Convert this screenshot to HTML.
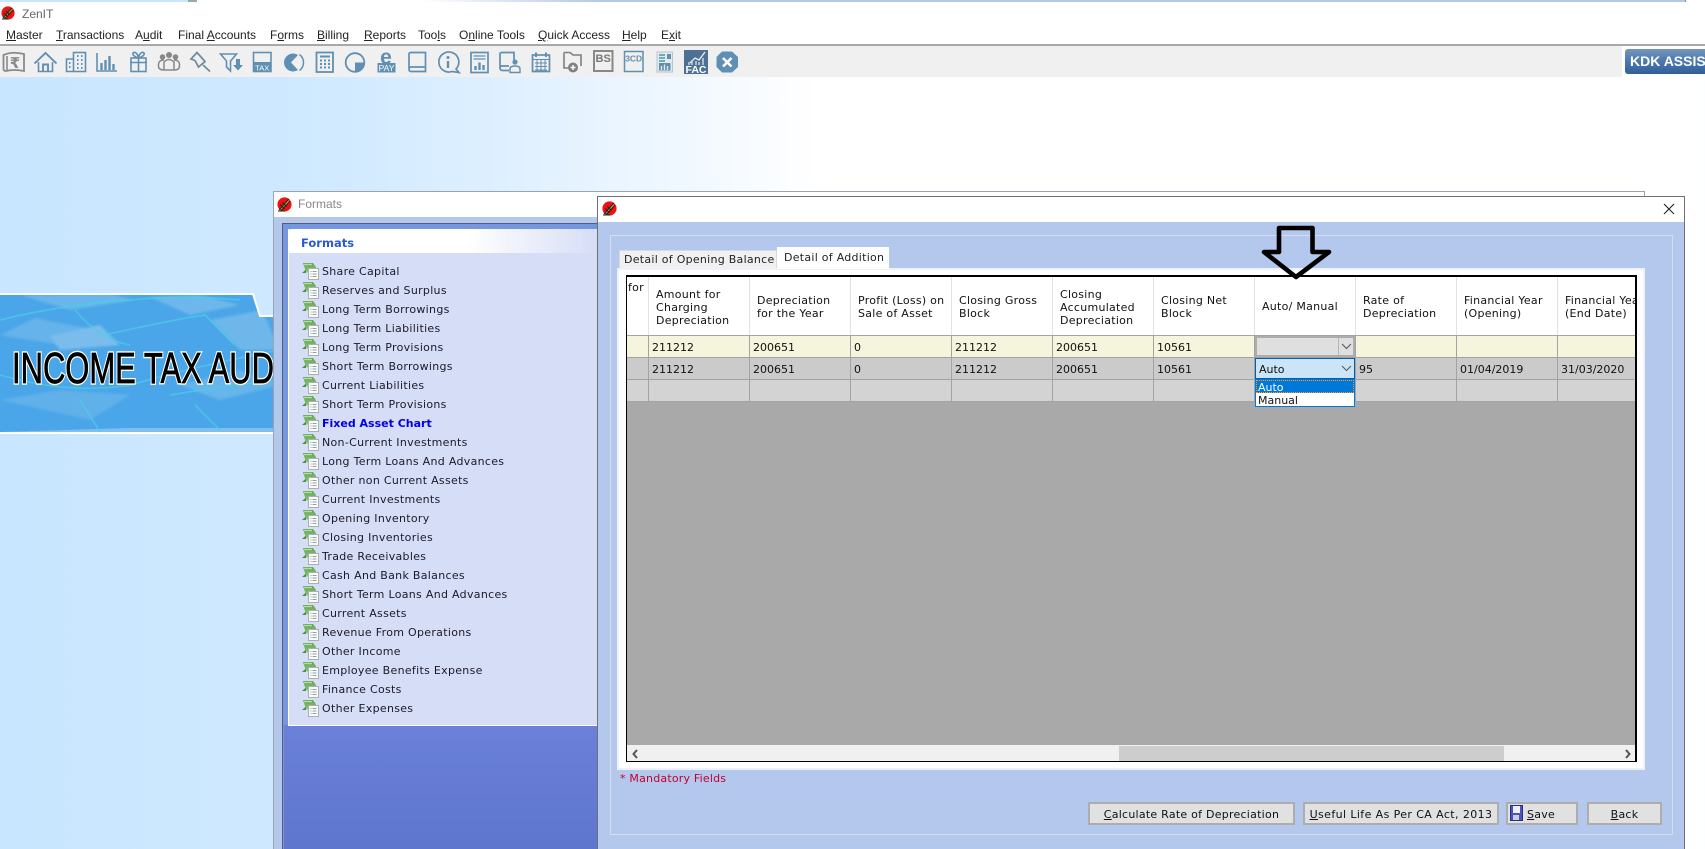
<!DOCTYPE html>
<html>
<head>
<meta charset="utf-8">
<title>ZenIT</title>
<style>
html,body{margin:0;padding:0}
body{width:1705px;height:849px;overflow:hidden;position:relative;background:linear-gradient(to right,#c8e6ff 0%,#cfe9ff 18%,#dff0ff 30%,#f0f8ff 40%,#fff 48%);font-family:"DejaVu Sans","Liberation Sans",sans-serif;font-size:11px;color:#111}
.a{position:absolute}
.t{position:absolute;white-space:nowrap;line-height:13px}
.l{letter-spacing:.27px}
.m{position:absolute;top:28px;font:12px/14px "Liberation Sans",sans-serif;color:#222;white-space:nowrap}
.m u{text-underline-offset:1px}
.li{position:absolute;left:322px;white-space:nowrap;line-height:14px;color:#1a1a2a;letter-spacing:.3px}
.ic{position:absolute;left:302px;width:17px;height:17px}
.v{position:absolute;width:1px;top:277px;height:58px;background:#e3e3e3}
.v2{position:absolute;width:1px;top:335px;height:66px;background:#a3a3a3}
.h{position:absolute;left:627px;width:1010px;height:1px;background:#a3a3a3}
.btn{position:absolute;top:802px;height:23px;box-sizing:border-box;background:#e1e1e1;border:2px solid #adadad;line-height:21px;text-align:center;white-space:nowrap;color:#111;letter-spacing:.25px}
</style>
</head>
<body>
<svg width="0" height="0" style="position:absolute">
<defs>
<symbol id="logo" viewBox="0 0 14 14">
<circle cx="7" cy="7" r="6.600" fill="#ee1212"/>
<path d="M3 11 L10 2.500 L12 4 L5 12 Z" fill="#c9b23a"/>
<path d="M2 12 L11 2 M4 12.500 L12 4 M3 7 L7 11 M5 5 L9 9 M1 13 H7" stroke="#222" stroke-width="1" fill="none"/>
</symbol>
<linearGradient id="gg" x1="0" y1="0" x2="0" y2="1"><stop offset="0" stop-color="#5fa650"/><stop offset="1" stop-color="#8cc47a"/></linearGradient>
<symbol id="doc" viewBox="0 0 17 17">
<path d="M1 0 H11 L14 4 V6 H7 V9.500 H5 L3.500 7.500 Z" fill="url(#gg)"/>
<path d="M2 1.500 H10" stroke="#b5dd9f" stroke-width="1.400"/>
<path d="M0 10 L4 6.500 V10 Z" fill="#4c8f40"/>
<rect x="6.500" y="5.500" width="10" height="11" fill="#fbfbf8" stroke="#aab0b2"/>
<path d="M8.500 8.500h1M8.500 11h1M8.500 13.500h1M10.500 8.500h4M10.500 11h4M10.500 13.500h4" stroke="#8aa3b0" stroke-width="1"/>
</symbol>
</defs>
</svg>

<!-- top strip -->
<div class="a" style="left:0;top:0;width:1705px;height:2px;background:linear-gradient(to right,#c8e6ff 0,#c8e6ff 188px,#9aa 188px,#9aa 197px,#fff 197px,#fff 420px,#b4c7ec 600px,#b4c7ec 1685px,#888 1685px,#888 1686px,#fff 1686px)"></div>
<div class="a" style="left:0;top:2px;width:1705px;height:42px;background:#fff"></div>
<svg class="a" style="left:1px;top:6px" width="14" height="14"><use href="#logo" width="14" height="14"/></svg>
<div class="t" style="left:22px;top:7px;font:12px/14px 'Liberation Sans',sans-serif;color:#666">ZenIT</div>

<div class="m" style="left:6px"><u>M</u>aster</div>
<div class="m" style="left:56px"><u>T</u>ransactions</div>
<div class="m" style="left:135px">A<u>u</u>dit</div>
<div class="m" style="left:178px">Final <u>A</u>ccounts</div>
<div class="m" style="left:270px">F<u>o</u>rms</div>
<div class="m" style="left:317px"><u>B</u>illing</div>
<div class="m" style="left:364px"><u>R</u>eports</div>
<div class="m" style="left:418px">Too<u>l</u>s</div>
<div class="m" style="left:459px">O<u>n</u>line Tools</div>
<div class="m" style="left:538px"><u>Q</u>uick Access</div>
<div class="m" style="left:622px"><u>H</u>elp</div>
<div class="m" style="left:661px">E<u>x</u>it</div>

<div class="a" style="left:0;top:44px;width:1705px;height:2px;background:#a8a8a8"></div>
<div class="a" style="left:0;top:46px;width:1622px;height:31px;background:#f0f0f0"></div>

<!-- toolbar icons -->
<svg class="a" style="left:0;top:46px" width="760" height="32" viewBox="0 46 760 32" fill="none" stroke="#5f90b3" stroke-width="1.600" font-family="Liberation Sans,sans-serif">
<!-- rupee -->
<path d="M3.500 55 Q12 51 24 54 V71 Q14 69 6 71 Q3.500 71 3.500 69 Z" stroke="#8a8a8a" stroke-width="1.800"/>
<path d="M7 56 V70" stroke="#8a8a8a"/>
<text x="15" y="68" font-size="15" font-weight="bold" fill="#8a8a8a" stroke="none" text-anchor="middle" font-family="DejaVu Sans,sans-serif">₹</text>
<!-- house -->
<path d="M34.500 63.500 L45.500 53 L56.500 63.500" stroke-width="1.900"/><path d="M38.500 62 V71.500 H52.500 V62"/><path d="M43 71 V64.500 H48 V71" stroke-width="1.900"/>
<!-- buildings -->
<path d="M73 59 H66.500 V71.500 H73" /><rect x="73.500" y="52.500" width="12" height="19"/>
<path d="M77 56h1.500M81 56h1.500M77 60h1.500M81 60h1.500M77 64h1.500M81 64h1.500M77 68h1.500M81 68h1.500M69 63h1.500M69 67h1.500" stroke-width="2"/>
<!-- bars -->
<path d="M97 53 V71 H117"/><path d="M101.500 70 V63M105.500 70 V60M109.500 70 V56M113.500 70 V64" stroke-width="2.400"/>
<!-- gift -->
<rect x="131" y="58" width="15" height="13.500"/><path d="M130 62.500H147M138.500 58V71.500M138.500 58 C135 57 132 55 133 53 C135 51 138 54 138.500 58 C139 54 142 51 144 53 C145 55 142 57 138.500 58"/>
<!-- people -->
<g stroke="#888" stroke-width="1.500"><circle cx="169" cy="55" r="2.300" fill="#888"/><circle cx="162.500" cy="57" r="2" fill="#888"/><circle cx="175.500" cy="57" r="2" fill="#888"/><path d="M164 70 V62 Q169 57 174 62 V70"/><path d="M164 60 Q158 60 158.500 66 Q158.500 70 164 70 H174 Q179.500 70 179.500 66 Q180 60 174 60"/></g>
<!-- pin -->
<g stroke="#6f8a9e" stroke-width="1.700"><path d="M197 52.500 L191 59 L195 60.500 L198.500 67 L205 61.500 L201 57 Z"/><path d="M203 65 L210 71.500" /></g>
<!-- funnel -->
<path d="M220.500 54 H236.500 L230.500 61 V71 L226.500 67 V61 Z"/><path d="M236 59 V65 H233 L238 70.500 L243 65 H240 V59 Z" fill="#5f90b3" stroke="none"/>
<!-- TAX -->
<rect x="253.500" y="52.500" width="17.500" height="19"/><rect x="253" y="62" width="18.500" height="10" fill="#5f90b3" stroke="none"/>
<text x="262.200" y="70.500" font-size="7.500" fill="#fff" stroke="none" text-anchor="middle">TAX</text>
<!-- pie -->
<path d="M298 55 A9 9 0 1 0 298 70 L291 62.500 Z" fill="#5f90b3" stroke="none"/><path d="M299.500 54.500 A10 10 0 0 1 299.500 70.500" stroke-width="1.500"/>
<!-- calc -->
<rect x="316.500" y="52.500" width="16.500" height="19.500" stroke-width="1.800"/><path d="M320 56.500H330" stroke-width="2"/><path d="M320 60.500h2M324 60.500h2M328 60.500h2M320 64h2M324 64h2M328 64h2M320 67.500h2M324 67.500h2M328 67.500h2" stroke-width="2"/>
<!-- circle quarter -->
<circle cx="355" cy="62.500" r="9.300" stroke-width="1.800"/><path d="M355 62.500 H364.500 A9.500 9.500 0 0 1 355 72 Z" fill="#5f90b3" stroke="none"/>
<!-- e pay -->
<text x="386" y="64" font-size="21" font-weight="bold" fill="#5f90b3" stroke="none" text-anchor="middle">e</text>
<rect x="377.500" y="63" width="18" height="9.500" fill="#5f90b3" stroke="none"/>
<text x="386.500" y="71.200" font-size="8.500" fill="#fff" stroke="none" text-anchor="middle">PAY</text>
<!-- book -->
<path d="M409 69 V54 Q409 52.500 411 52.500 H425.500 V71.500 H411 Q409 71.500 409 69 Q409 67 411 67 H425.500" stroke-width="1.700"/>
<!-- i bubble -->
<path d="M456 69 A10 10 0 1 0 452 71.500 L459 72.500 Z" stroke-width="1.700"/><circle cx="448" cy="57.500" r="1.500" fill="#5f90b3" stroke="none"/><path d="M448 61 V68" stroke-width="2.400"/>
<!-- doc bars -->
<rect x="471" y="52.500" width="17" height="20" stroke-width="1.700"/><path d="M473.500 56H485.500M473.500 59H485.500" stroke-width="1.200"/><path d="M475.500 70 V66M479.500 70 V62.500M483.500 70 V65" stroke-width="2.400"/>
<!-- book user -->
<path d="M500 68 V54 Q500 52.500 502 52.500 H514 V60M500 68 Q500 66 502 66 H509 M500 68 Q500 70.500 503 70.500 H509" stroke-width="1.700"/><circle cx="515" cy="62" r="2.600" fill="#5f90b3" stroke="none"/><path d="M510 72.500 V69 Q510 66 515 66 Q520 66 520 69 V72.500 Z" stroke-width="1.400"/>
<!-- calendar -->
<rect x="532.500" y="55" width="17" height="16.500" stroke-width="1.700"/><path d="M536 52.500V57M546 52.500V57" stroke-width="2"/><path d="M533 59.500H549M535 63H547M535 66.500H547M535 70H547M537 60V71M541 60V71M545 60V71" stroke-width="1"/>
<!-- folder -->
<path d="M564 52.500 H570 L573 55 H581 V66" stroke="#808080"/><path d="M564 52.500 V68 H569" stroke="#808080"/><circle cx="573" cy="67.500" r="5" fill="#808080" stroke="none"/><path d="M570.500 67.500H575.500M573 65V70" stroke="#fff" stroke-width="1.500"/>
<!-- BS -->
<rect x="594" y="51" width="18.500" height="20" stroke="#888" stroke-width="2" fill="#f0f0f0"/>
<text x="603.200" y="62" font-size="11" font-weight="bold" fill="#777" stroke="none" text-anchor="middle">BS</text>
<!-- 3CD -->
<rect x="624.500" y="51.500" width="18.500" height="20" stroke-width="1.500"/>
<text x="633.700" y="61.500" font-size="8.500" font-weight="bold" fill="#6a8fa8" stroke="none" text-anchor="middle">3CD</text>
<!-- report -->
<rect x="657" y="52" width="15.500" height="20" fill="#e4e9ec" stroke="#b4c5cf" stroke-width="1"/><path d="M659 55H665M659 58H665M659 61H665" stroke="#1f8f90" stroke-width="1.300"/><rect x="667" y="54" width="4" height="5" fill="#5f90b3" stroke="none"/><rect x="659" y="63" width="11.500" height="7.500" fill="#5f90b3" stroke="none"/><path d="M661.500 70V66M664.500 70V64.500M667.500 70V66" stroke="#e4e9ec" stroke-width="1.300"/>
<!-- FAC -->
<rect x="684" y="50" width="24" height="24" fill="#4d7095" stroke="none"/>
<path d="M690 63 L695 58 L699 60 L705 52" stroke="#e9f0f6" stroke-width="1.300"/><path d="M689 65V62M692 65V60M696 65V61M699 65V62M703 65V58" stroke="#cbd6e2" stroke-width="1.500"/>
<text x="696" y="73" font-size="10.500" font-weight="bold" fill="#fff" stroke="none" text-anchor="middle">FAC</text>
<!-- X -->
<path d="M722 51.500 H732 L738 57 V67 L732 72.500 H722 L716.500 67 V57 Z" fill="#5f90b3" stroke="none"/><path d="M723 58 L731.500 66.500 M731.500 58 L723 66.500" stroke="#fff" stroke-width="2.600"/>
</svg>

<!-- KDK -->
<div class="a" style="left:1623px;top:46px;width:1px;height:31px;background:#fff"></div>
<div class="a" style="left:1625px;top:49px;width:84px;height:25px;border-radius:3px;background:linear-gradient(#7596bd,#567fb0 35%,#2f5f9c);color:#fff;font:bold 14px/25px 'Liberation Sans',sans-serif;padding-left:5px;box-sizing:border-box;white-space:nowrap;overflow:hidden">KDK ASSIST</div>

<!-- banner -->
<svg class="a" style="left:0;top:291px" width="280" height="146" viewBox="0 291 280 146">
<defs><clipPath id="bc"><path d="M0 294 H253 L260 316 H280 V433 H0 Z"/></clipPath><filter id="bl"><feGaussianBlur stdDeviation="1.200"/></filter></defs>
<path d="M0 294 H253 L260 316 H280 V432 H0 Z" fill="#4aa6e8"/>
<g clip-path="url(#bc)">
<g filter="url(#bl)" opacity=".6">
<path d="M20 295 L70 310 L135 300 L110 294 Z" fill="#7fc0ee"/>
<path d="M35 318 L95 330 L60 345 L0 335 Z" fill="#78bcec"/>
<path d="M50 336 L100 325 L120 345 L60 350Z" fill="#9ccdee"/>
<path d="M150 297 L200 295 L240 305 L190 315 Z" fill="#85c4ee"/>
<path d="M210 320 L262 310 L280 350 L240 350 Z" fill="#85c3ec"/>
<path d="M0 400 L60 390 L130 395 L90 420 Z" fill="#6fb8ec"/>
<path d="M180 385 L240 370 L280 385 L220 400Z" fill="#7abfee"/>
</g>
<path d="M0 432 H280 V428 H130 Z" fill="#7ebfee"/>
<path d="M0 320 Q60 305 130 300 Q180 295 240 300 M75 310 Q100 340 130 345 M105 335 Q170 320 205 315 L235 345 M0 375 Q70 395 130 385 Q200 365 280 350 M80 400 L100 432 M170 395 Q230 385 280 380 M195 405 L220 430" stroke="#4cd0e4" stroke-width="1.700" fill="none" opacity=".65"/>
</g>
<path d="M0 294 H253 L260 316 H280" fill="none" stroke="#fff" stroke-width="2"/>
<path d="M0 433 H280" stroke="#fff" stroke-width="2"/>
<text x="12" y="383" textLength="262" lengthAdjust="spacingAndGlyphs" font-family="Liberation Sans,sans-serif" font-size="44" fill="#000" stroke="#fff" stroke-width="3.400" paint-order="stroke">INCOME TAX AUD</text>
<text x="12" y="383" textLength="262" lengthAdjust="spacingAndGlyphs" font-family="Liberation Sans,sans-serif" font-size="44" fill="#000" stroke="#000" stroke-width=".7">INCOME TAX AUD</text>
</svg>

<!-- Formats window -->
<div class="a" style="left:273px;top:191px;width:1372px;height:658px;background:#b4c7ec;border:1px solid #9ba3ad;box-sizing:border-box;border-bottom:0"></div>
<div class="a" style="left:274px;top:192px;width:1370px;height:25px;background:#fff"></div>
<svg class="a" style="left:277px;top:197px" width="15" height="15"><use href="#logo" width="15" height="15"/></svg>
<div class="t" style="left:298px;top:197px;font:12px/14px 'Liberation Sans',sans-serif;color:#888">Formats</div>
<div class="a" style="left:282px;top:223px;width:330px;height:626px;box-sizing:border-box;border:1px solid #555d6e;border-bottom:0;border-right:0;background:#7597e0"></div>
<div class="a" style="left:284px;top:725px;width:314px;height:124px;background:linear-gradient(#6a80d9,#5f76ce)"></div>
<div class="a" style="left:288px;top:229px;width:310px;height:24px;background:linear-gradient(to right,#fff 0%,#fff 58%,#d6ddf6 100%);border-radius:3px 0 0 0"></div>
<div class="a" style="left:288px;top:253px;width:310px;height:472px;background:#d6ddf6"></div>
<div class="a" style="left:288px;top:725px;width:310px;height:1px;background:#fff"></div>
<div class="a" style="left:288px;top:229px;width:1px;height:497px;background:#fff"></div>
<div class="t" style="left:301px;top:237px;font-weight:bold;color:#2a58d8;font-size:11.500px">Formats</div>

<svg class="ic" style="top:263px"><use href="#doc" width="17" height="17"/></svg><div class="li" style="top:265px">Share Capital</div>
<svg class="ic" style="top:282px"><use href="#doc" width="17" height="17"/></svg><div class="li" style="top:284px">Reserves and Surplus</div>
<svg class="ic" style="top:301px"><use href="#doc" width="17" height="17"/></svg><div class="li" style="top:303px">Long Term Borrowings</div>
<svg class="ic" style="top:320px"><use href="#doc" width="17" height="17"/></svg><div class="li" style="top:322px">Long Term Liabilities</div>
<svg class="ic" style="top:339px"><use href="#doc" width="17" height="17"/></svg><div class="li" style="top:341px">Long Term Provisions</div>
<svg class="ic" style="top:358px"><use href="#doc" width="17" height="17"/></svg><div class="li" style="top:360px">Short Term Borrowings</div>
<svg class="ic" style="top:377px"><use href="#doc" width="17" height="17"/></svg><div class="li" style="top:379px">Current Liabilities</div>
<svg class="ic" style="top:396px"><use href="#doc" width="17" height="17"/></svg><div class="li" style="top:398px">Short Term Provisions</div>
<svg class="ic" style="top:415px"><use href="#doc" width="17" height="17"/></svg><div class="li" style="top:417px;font-weight:bold;color:#0000e6;letter-spacing:0">Fixed Asset Chart</div>
<svg class="ic" style="top:434px"><use href="#doc" width="17" height="17"/></svg><div class="li" style="top:436px">Non-Current Investments</div>
<svg class="ic" style="top:453px"><use href="#doc" width="17" height="17"/></svg><div class="li" style="top:455px">Long Term Loans And Advances</div>
<svg class="ic" style="top:472px"><use href="#doc" width="17" height="17"/></svg><div class="li" style="top:474px">Other non Current Assets</div>
<svg class="ic" style="top:491px"><use href="#doc" width="17" height="17"/></svg><div class="li" style="top:493px">Current Investments</div>
<svg class="ic" style="top:510px"><use href="#doc" width="17" height="17"/></svg><div class="li" style="top:512px">Opening Inventory</div>
<svg class="ic" style="top:529px"><use href="#doc" width="17" height="17"/></svg><div class="li" style="top:531px">Closing Inventories</div>
<svg class="ic" style="top:548px"><use href="#doc" width="17" height="17"/></svg><div class="li" style="top:550px">Trade Receivables</div>
<svg class="ic" style="top:567px"><use href="#doc" width="17" height="17"/></svg><div class="li" style="top:569px">Cash And Bank Balances</div>
<svg class="ic" style="top:586px"><use href="#doc" width="17" height="17"/></svg><div class="li" style="top:588px">Short Term Loans And Advances</div>
<svg class="ic" style="top:605px"><use href="#doc" width="17" height="17"/></svg><div class="li" style="top:607px">Current Assets</div>
<svg class="ic" style="top:624px"><use href="#doc" width="17" height="17"/></svg><div class="li" style="top:626px">Revenue From Operations</div>
<svg class="ic" style="top:643px"><use href="#doc" width="17" height="17"/></svg><div class="li" style="top:645px">Other Income</div>
<svg class="ic" style="top:662px"><use href="#doc" width="17" height="17"/></svg><div class="li" style="top:664px">Employee Benefits Expense</div>
<svg class="ic" style="top:681px"><use href="#doc" width="17" height="17"/></svg><div class="li" style="top:683px">Finance Costs</div>
<svg class="ic" style="top:700px"><use href="#doc" width="17" height="17"/></svg><div class="li" style="top:702px">Other Expenses</div>

<!-- Dialog -->
<div class="a" style="left:597px;top:196px;width:1088px;height:653px;box-sizing:border-box;border:1px solid #707070;border-bottom:0;background:#b4c7ec"></div>
<div class="a" style="left:598px;top:197px;width:1086px;height:25px;background:#fff"></div>
<svg class="a" style="left:602px;top:201px" width="15" height="15"><use href="#logo" width="15" height="15"/></svg>
<svg class="a" style="left:1663px;top:203px" width="12" height="12"><path d="M1 1 L11 11 M11 1 L1 11" stroke="#222" stroke-width="1.100"/></svg>
<div class="a" style="left:610px;top:235px;width:1063px;height:600px;box-sizing:border-box;border:1px solid #d5deee"></div>

<!-- tabs -->
<div class="a" style="left:617px;top:268px;width:1028px;height:502px;box-sizing:border-box;background:#fff;border:2px solid #eef1f8"></div>
<div class="a" style="left:619px;top:250px;width:158px;height:18px;box-sizing:border-box;background:#f0f0f0;border:1px solid #d9d9d9;border-bottom:0"></div>
<div class="t l" style="left:624px;top:253px;color:#222">Detail of Opening Balance</div>
<div class="a" style="left:777px;top:247px;width:112px;height:22px;background:#fff"></div>
<div class="t l" style="left:784px;top:251px;color:#222">Detail of Addition</div>

<!-- grid -->
<div class="a" style="left:626px;top:275px;width:1011px;height:487px;box-sizing:border-box;border:solid #000;border-width:2px 2px 1px 1px;overflow:hidden;background:#a9a9a9">
<div class="a" style="left:-627px;top:-277px;width:1705px;height:849px">
<div class="a" style="left:627px;top:277px;width:1010px;height:58px;background:#fff"></div>
<div class="a" style="left:627px;top:335px;width:1010px;height:22px;background:#f5f4dc"></div>
<div class="a" style="left:627px;top:357px;width:1010px;height:22px;background:#cbcbcb"></div>
<div class="a" style="left:627px;top:379px;width:1010px;height:22px;background:#d3d3d3"></div>
<div class="h" style="top:335px"></div><div class="h" style="top:357px"></div><div class="h" style="top:379px"></div><div class="h" style="top:401px"></div>

<div class="v" style="left:648px"></div><div class="v" style="left:749px"></div><div class="v" style="left:850px"></div><div class="v" style="left:951px"></div><div class="v" style="left:1052px"></div><div class="v" style="left:1153px"></div><div class="v" style="left:1254px"></div><div class="v" style="left:1355px"></div><div class="v" style="left:1456px"></div><div class="v" style="left:1557px"></div>
<div class="v2" style="left:648px"></div><div class="v2" style="left:749px"></div><div class="v2" style="left:850px"></div><div class="v2" style="left:951px"></div><div class="v2" style="left:1052px"></div><div class="v2" style="left:1153px"></div><div class="v2" style="left:1254px"></div><div class="v2" style="left:1355px"></div><div class="v2" style="left:1456px"></div><div class="v2" style="left:1557px"></div>

<div class="t l" style="left:628px;top:281px">for</div>
<div class="t l" style="left:656px;top:288px">Amount for<br>Charging<br>Depreciation</div>
<div class="t l" style="left:757px;top:294px">Depreciation<br>for the Year</div>
<div class="t l" style="left:858px;top:294px">Profit (Loss) on<br>Sale of Asset</div>
<div class="t l" style="left:959px;top:294px">Closing Gross<br>Block</div>
<div class="t l" style="left:1060px;top:288px">Closing<br>Accumulated<br>Depreciation</div>
<div class="t l" style="left:1161px;top:294px">Closing Net<br>Block</div>
<div class="t l" style="left:1262px;top:300px">Auto/ Manual</div>
<div class="t l" style="left:1363px;top:294px">Rate of<br>Depreciation</div>
<div class="t l" style="left:1464px;top:294px">Financial Year<br>(Opening)</div>
<div class="t l" style="left:1565px;top:294px">Financial Year<br>(End Date)</div>

<div class="t" style="left:652px;top:341px">211212</div><div class="t" style="left:753px;top:341px">200651</div><div class="t" style="left:854px;top:341px">0</div><div class="t" style="left:955px;top:341px">211212</div><div class="t" style="left:1056px;top:341px">200651</div><div class="t" style="left:1157px;top:341px">10561</div>
<div class="t" style="left:652px;top:363px">211212</div><div class="t" style="left:753px;top:363px">200651</div><div class="t" style="left:854px;top:363px">0</div><div class="t" style="left:955px;top:363px">211212</div><div class="t" style="left:1056px;top:363px">200651</div><div class="t" style="left:1157px;top:363px">10561</div>
<div class="t" style="left:1359px;top:363px">95</div><div class="t" style="left:1460px;top:363px">01/04/2019</div><div class="t" style="left:1561px;top:363px">31/03/2020</div>

<!-- combos -->
<div class="a" style="left:1255px;top:336px;width:100px;height:21px;box-sizing:border-box;background:#dfdfdf;border:2px solid #adadad"></div>
<div class="a" style="left:1338px;top:338px;width:1px;height:17px;background:#b5b5b5"></div>
<svg class="a" style="left:1341px;top:343px" width="11" height="7"><path d="M1 1 L5.500 5.500 L10 1" fill="none" stroke="#555" stroke-width="1"/></svg>
<div class="a" style="left:1255px;top:358px;width:100px;height:21px;box-sizing:border-box;background:#cce4f7;border:1px solid #005fb0"></div>
<div class="t" style="left:1259px;top:363px">Auto</div>
<svg class="a" style="left:1341px;top:365px" width="11" height="7"><path d="M1 1 L5.500 5.500 L10 1" fill="none" stroke="#555" stroke-width="1"/></svg>
<div class="a" style="left:1255px;top:379px;width:100px;height:28px;box-sizing:border-box;background:#fff;border:1px solid #0078d7"></div>
<div class="a" style="left:1256px;top:380px;width:98px;height:13px;box-sizing:border-box;background:#0078d7;outline:1px dotted #ff9a2e;outline-offset:-1px"></div>
<div class="t" style="left:1258px;top:381px;color:#fff">Auto</div>
<div class="t" style="left:1258px;top:394px;color:#111">Manual</div>

<!-- scrollbar -->
<div class="a" style="left:627px;top:745px;width:1010px;height:17px;background:#f0f0f0"></div>
<div class="a" style="left:1119px;top:746px;width:385px;height:15px;background:#cdcdcd"></div>
<svg class="a" style="left:631px;top:749px" width="8" height="10"><path d="M6 1 L2.500 5 L6 9" fill="none" stroke="#555" stroke-width="2"/></svg>
<svg class="a" style="left:1624px;top:749px" width="8" height="10"><path d="M2 1 L5.500 5 L2 9" fill="none" stroke="#555" stroke-width="2"/></svg>
</div>
</div>

<!-- arrow -->
<svg class="a" style="left:1255px;top:222px" width="82" height="62" viewBox="1255 222 82 62"><path d="M1279 228 H1312.500 V252 H1329 L1296 277 L1264 252 H1279 Z" fill="none" stroke="#000" stroke-width="4.600" stroke-linejoin="round"/></svg>

<div class="t l" style="left:620px;top:772px;color:#c4002f;letter-spacing:.2px">* Mandatory Fields</div>

<div class="btn" style="left:1088px;width:207px"><u>C</u>alculate Rate of Depreciation</div>
<div class="btn" style="left:1303px;width:196px;letter-spacing:.4px"><u>U</u>seful Life As Per CA Act, 2013</div>
<div class="btn" style="left:1506px;width:72px;text-align:left;padding-left:19px"><u>S</u>ave</div>
<svg class="a" style="left:1510px;top:805px" width="13" height="16"><rect x=".5" y=".5" width="12" height="15" fill="#4a55b5" stroke="#2a3080"/><rect x="3" y="1" width="7" height="7" fill="#eef"/><rect x="3" y="10" width="6" height="5" fill="#c8cce8"/></svg>
<div class="btn" style="left:1587px;width:75px"><u>B</u>ack</div>
</body>
</html>
